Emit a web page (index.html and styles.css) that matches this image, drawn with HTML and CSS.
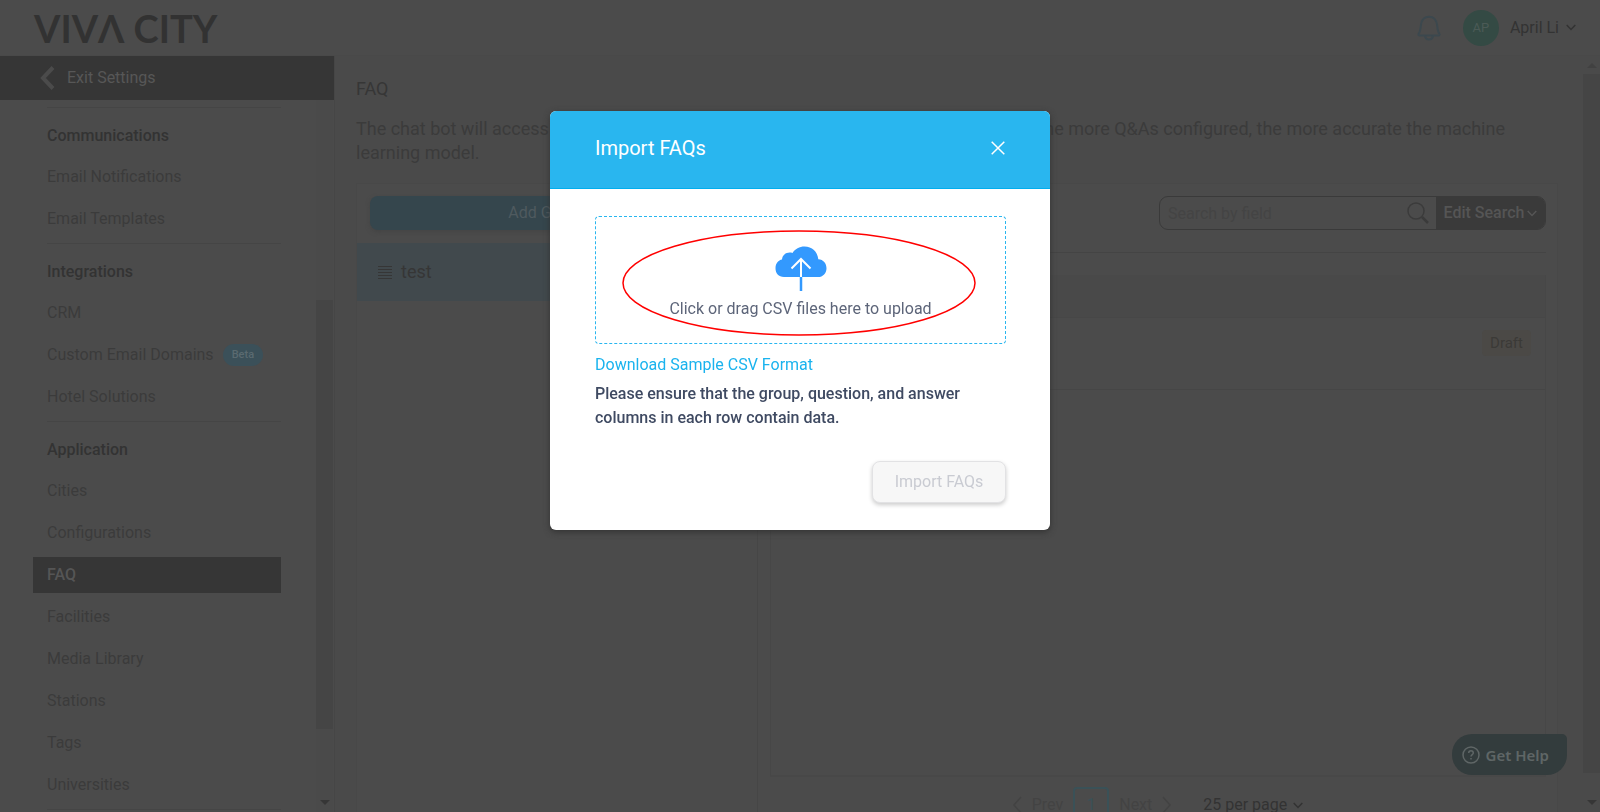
FILE: index.html
```
<!DOCTYPE html>
<html lang="en">
<head>
    <meta charset="UTF-8">
    <title>FAQ - Viva City</title>
    <link rel="stylesheet" href="styles.css">
</head>
<body>
<header class="topbar">
    <a class="logo" href="#" aria-label="VIVA CITY">VIVΛ CITY</a>
    <div class="account">
        <button class="bell" aria-label="Notifications">
            <svg width="24" height="26" viewBox="0 0 24 26" fill="none" stroke="currentColor" stroke-width="2"><path d="M2.5 20.500h19c1 0 1.500-1 .8-1.800-1.600-2-1.600-4.200-2.300-9C19.300 5 16.500 1.800 12 1.800S4.700 5 4 9.700c-.7 4.800-.7 7-2.300 9-.7.800-.2 1.800.8 1.800z"/><path d="M8 21c.5 2.600 2 3.500 4 3.500s3.500-.9 4-3.500"/></svg>
        </button>
        <span class="avatar">AP</span>
        <button class="user">April Li
            <svg width="10" height="7" viewBox="0 0 10 7" fill="none" stroke="currentColor" stroke-width="1.500"><path d="M.7 1L5 5.500 9.300 1"/></svg>
        </button>
    </div>
</header>
<div class="page">
    <aside class="sidebar">
        <a class="exit" href="#">
            <svg width="15" height="24" viewBox="0 0 15 24" fill="none" stroke="currentColor" stroke-width="4"><path d="M13 1.500L3 12l10 10.500"/></svg>
            Exit Settings
        </a>
        <div class="side-body">
            <nav class="menu">
                <section>
                    <h2>Communications</h2>
                    <a href="#">Email Notifications</a>
                    <a href="#">Email Templates</a>
                </section>
                <section>
                    <h2>Integrations</h2>
                    <a href="#">CRM</a>
                    <a href="#">Custom Email Domains <span class="beta">Beta</span></a>
                    <a href="#">Hotel Solutions</a>
                </section>
                <section>
                    <h2>Application</h2>
                    <a href="#">Cities</a>
                    <a href="#">Configurations</a>
                    <a class="active" href="#">FAQ</a>
                    <a href="#">Facilities</a>
                    <a href="#">Media Library</a>
                    <a href="#">Stations</a>
                    <a href="#">Tags</a>
                    <a href="#">Universities</a>
                </section>
                <section></section>
            </nav>
            <div class="scroll side-scroll">
                <div class="thumb"></div>
                <div class="down"></div>
            </div>
        </div>
    </aside>
    <main class="content">
        <h1>FAQ</h1>
        <p class="intro">The chat bot will access the configured Q&amp;As to answer commonly asked questions. The more Q&amp;As configured, the more accurate the machine learning model.</p>
        <div class="card">
            <div class="groups">
                <button class="add">Add Group</button>
                <a class="group" href="#">
                    <svg width="14" height="13" viewBox="0 0 14 13" stroke="currentColor" stroke-width="1"><path d="M0 .5h14M0 3.500h14M0 6.500h14M0 9.500h14M0 12.500h14"/></svg>
                    test
                </a>
            </div>
            <div class="questions">
                <form class="search">
                    <input type="text" placeholder="Search by field" aria-label="Search by field">
                    <svg width="22" height="22" viewBox="0 0 22 22" fill="none" stroke="currentColor"><circle cx="9" cy="9" r="8" stroke-width="1.500"/><path d="M15 15l6 6" stroke-width="2.500"/></svg>
                    <button type="button">Edit Search
                        <svg width="10" height="7" viewBox="0 0 10 7" fill="none" stroke="currentColor" stroke-width="1.500"><path d="M.7 1L5 5.500 9.300 1"/></svg>
                    </button>
                </form>
                <div class="list">
                    <div class="list-head"></div>
                    <div class="list-row"><span class="draft">Draft</span></div>
                </div>
                <div class="pager">
                    <button class="prev"><svg width="9" height="18" viewBox="0 0 9 18" fill="none" stroke="currentColor" stroke-width="1.500"><path d="M8 1L1 9l7 8"/></svg>Prev</button>
                    <button class="num">1</button>
                    <button class="next">Next<svg width="9" height="18" viewBox="0 0 9 18" fill="none" stroke="currentColor" stroke-width="1.500"><path d="M1 1l7 8-7 8"/></svg></button>
                    <button class="per">25 per page
                        <svg width="10" height="7" viewBox="0 0 10 7" fill="none" stroke="currentColor" stroke-width="1.500"><path d="M.7 1L5 5.500 9.300 1"/></svg>
                    </button>
                </div>
            </div>
        </div>
    </main>
    <div class="scroll page-scroll">
        <div class="up"></div>
        <div class="thumb"></div>
        <div class="down"></div>
    </div>
</div>
<button class="help">
    <svg width="18" height="18" viewBox="0 0 18 18" fill="none" stroke="currentColor" stroke-width="1.500"><circle cx="9" cy="9" r="8"/><path d="M6.700 7c0-3 4.600-3 4.600 0 0 1.500-2.300 1.600-2.300 3.400M9 12v1.600"/></svg>
    Get Help
</button>
<div class="overlay">
    <div class="modal" role="dialog" aria-labelledby="modal-title">
        <div class="modal-head">
            <h2 id="modal-title">Import FAQs</h2>
            <button class="close" aria-label="Close">
                <svg width="14" height="14" viewBox="0 0 14 14" stroke="currentColor" stroke-width="1.500"><path d="M.7.7l12.600 12.600M13.300.7L.7 13.300"/></svg>
            </button>
        </div>
        <div class="modal-body">
            <button class="drop">
                <svg width="52" height="45" viewBox="0 0 52 45"><path d="M9 31C3.500 31 .5 27 .5 22.200c0-5 3-8 6.500-8.700C7.500 8.500 12 5.500 17.500 7 20 3 24.500.5 29.500.5c7.500 0 13 5 13.800 12.700 5 .3 8.200 4 8.200 9 0 5-3.500 8.800-8.500 8.800z" fill="#3399fe"/><path d="M26 31v14" stroke="#3399fe" stroke-width="2.500"/><path d="M26 31V13M16.500 22.500L26 13l9.500 9.500" fill="none" stroke="#fff" stroke-width="2"/></svg>
                <span>Click or drag CSV files here to upload</span>
                <svg class="ring" viewBox="0 0 354 106" preserveAspectRatio="none"><ellipse cx="177" cy="53" rx="176" ry="52" fill="none" stroke="#f00" stroke-width="1.500"/></svg>
            </button>
            <a class="sample" href="#">Download Sample CSV Format</a>
            <p>Please ensure that the group, question, and answer columns in each row contain data.</p>
            <button class="import" disabled>Import FAQs</button>
        </div>
    </div>
</div>
</body>
</html>
```
FILE: styles.css
```
*{
    box-sizing: border-box;
}
body{
    margin: 0;
    height: 100vh;
    display: flex;
    flex-direction: column;
    overflow: hidden;
    background: #4a4a4a;
    color: #3b3b3b;
    font: 16px/22px Roboto, sans-serif;
}
h1,h2,p{
    margin: 0;
}
a{
    color: inherit;
    text-decoration: none;
}
button{
    padding: 0;
    border: 0;
    background: none;
    color: inherit;
    font: inherit;
}
svg{
    flex: none;
}
.topbar{
    flex: none;
    height: 56px;
    padding: 0 24px 0 34px;
    display: flex;
    justify-content: space-between;
    align-items: center;
    background: #4b4b4b;
    border-bottom: 1px solid #494949;
}
.logo{
    font: 700 38px/54px Lato, sans-serif;
    color: #323232;
}
.account{
    display: flex;
    align-items: center;
}
.bell{
    height: 26px;
    color: #3c484e;
}
.avatar{
    width: 36px;
    height: 36px;
    margin: 0 11px 0 22px;
    border-radius: 50%;
    background: #344a44;
    color: #4b5a56;
    font-size: 13px;
    line-height: 36px;
    text-align: center;
}
.user{
    display: flex;
    align-items: center;
    gap: 7px;
    color: #333;
}
.page{
    flex: 1;
    min-height: 0;
    display: flex;
}
.sidebar{
    flex: none;
    width: 335px;
    display: flex;
    flex-direction: column;
    background: #4b4b4b;
    border-right: 1px solid #464646;
}
.exit{
    flex: none;
    height: 44px;
    padding-left: 40px;
    display: flex;
    align-items: center;
    gap: 12px;
    background: #363636;
    color: #575757;
}
.exit svg{
    color: #4b4b4b;
}
.side-body{
    flex: 1;
    min-height: 0;
    padding-right: 1px;
    display: flex;
    justify-content: space-between;
}
.menu{
    width: 281px;
    padding: 7px 0 0 33px;
    overflow: hidden;
}
.menu section:before{
    content: "";
    display: block;
    margin-left: 14px;
    border-top: 1px solid #454545;
}
.menu h2{
    margin: 17px 0 12px 14px;
    font-size: 16px;
    line-height: 22px;
    font-weight: 500;
    color: #333;
}
.menu a{
    height: 36px;
    margin-bottom: 6px;
    padding-left: 14px;
    display: flex;
    align-items: center;
}
.menu .active{
    background: #363636;
    color: #555;
    font-weight: 500;
}
.beta{
    margin-left: 9px;
    padding: 0 9px;
    border-radius: 11px;
    background: #3b5059;
    color: #5a6a70;
    font-size: 11px;
    font-weight: 500;
}
.scroll{
    width: 17px;
    display: flex;
    flex-direction: column;
    align-items: center;
}
.thumb{
    width: 100%;
    background: #454545;
}
.side-scroll{
    padding: 200px 0 7px;
    background: #4a4a4a;
    justify-content: space-between;
}
.side-scroll .thumb{
    height: 85%;
}
.up,.down{
    border: 5px solid transparent;
}
.down{
    border-top-color: #363636;
    border-bottom: 0;
}
.up{
    border-bottom-color: #414141;
    border-top: 0;
}
.page-scroll{
    padding: 7px 0;
    justify-content: space-between;
}
.page-scroll .thumb{
    flex: 1;
    margin: 6px 0 27px;
}
.content{
    flex: 1;
    min-width: 0;
    padding: 21px 25px 0 21px;
    display: flex;
    flex-direction: column;
}
h1{
    font-size: 18px;
    line-height: 24px;
    font-weight: 400;
    color: #363636;
}
.intro{
    margin: 16px 0 18px;
    font-size: 18px;
    line-height: 24px;
}
.card{
    flex: 1;
    min-height: 0;
    display: flex;
    border: 1px solid #484848;
    border-bottom: 0;
    background: #4b4b4b;
}
.groups{
    width: 401px;
    border-right: 1px solid #464646;
}
.add{
    width: 352px;
    height: 34px;
    margin: 12px 13px 13px;
    border-radius: 8px;
    background: #35464d;
    color: #4f5a5f;
    box-shadow: 0 2px 4px #444;
}
.group{
    height: 58px;
    padding-left: 21px;
    display: flex;
    align-items: center;
    gap: 9px;
    background: #41494d;
    color: #363636;
    font-size: 18px;
}
.questions{
    flex: 1;
    padding: 12px 11px 0 12px;
    display: flex;
    flex-direction: column;
}
.search{
    align-self: flex-end;
    width: 387px;
    height: 34px;
    margin-bottom: 22px;
    display: flex;
    align-items: center;
    border: 1px solid #3a3a3a;
    border-radius: 9px;
    overflow: hidden;
}
.search input{
    flex: 1;
    min-width: 0;
    height: 32px;
    padding: 0 8px;
    border: 0;
    background: none;
    font: inherit;
}
.search input::placeholder{
    color: #444;
}
.search > svg{
    margin-right: 7px;
}
.search button{
    width: 109px;
    height: 34px;
    display: flex;
    align-items: center;
    justify-content: center;
    gap: 3px;
    background: #3a3a3a;
    color: #555;
    font-weight: 500;
}
.questions:before{
    content: "";
    order: 1;
    border-top: 1px solid #444;
}
.list{
    order: 2;
    flex: 1;
    margin-top: 22px;
    border: 1px solid #474747;
    border-top: 0;
    border-bottom: 2px solid #484848;
}
.list-head{
    height: 43px;
    background: #494949;
    border-bottom: 1px solid #474747;
}
.list-row{
    height: 72px;
    padding: 12px 14px;
    display: flex;
    justify-content: flex-end;
    align-items: flex-start;
    border-bottom: 1px solid #464646;
}
.draft{
    padding: 2px 8px;
    border-radius: 4px;
    background: #4b4946;
    color: #3b3a37;
    font-size: 15px;
}
.pager{
    order: 3;
    flex: none;
    height: 35px;
    padding-top: 10px;
    display: flex;
    justify-content: center;
    align-items: flex-start;
    gap: 10px;
    color: #434343;
}
.pager button{
    height: 36px;
    display: flex;
    align-items: center;
    gap: 10px;
}
.pager .num{
    width: 36px;
    justify-content: center;
    border: 2px solid #3a5157;
    border-radius: 4px;
    color: #3a5157;
}
.pager .per{
    gap: 6px;
    margin-left: 22px;
    color: #333;
}
.help{
    position: fixed;
    right: 33px;
    bottom: 37px;
    height: 41px;
    padding: 0 18px 0 10px;
    display: flex;
    align-items: center;
    gap: 6px;
    border-radius: 20px 5px 20px 20px;
    background: #333c3d;
    color: #5f6666;
    font: 600 15px/22px "Noto Sans", sans-serif;
}
.overlay{
    position: fixed;
    inset: 0;
    display: flex;
    justify-content: center;
    align-items: flex-start;
    padding-top: 111px;
}
.modal{
    width: 500px;
    border-radius: 6px;
    background: #fff;
    box-shadow: 0 2px 6px #333;
    color: #3f4a62;
    overflow: hidden;
}
.modal-head{
    height: 78px;
    padding: 0 45px 3px;
    display: flex;
    justify-content: space-between;
    align-items: center;
    background: #29b6ef;
    border-bottom: 1px solid #00aeef;
    color: #fff;
}
.modal-head h2{
    font-size: 20px;
    font-weight: 400;
}
.close{
    height: 14px;
    line-height: 14px;
}
.close svg{
    display: block;
}
.modal-body{
    padding: 27px 44px 27px 45px;
    display: flex;
    flex-direction: column;
}
.drop{
    position: relative;
    height: 128px;
    padding-top: 6px;
    display: flex;
    flex-direction: column;
    align-items: center;
    justify-content: center;
    gap: 7px;
    border: 1px dashed #29b6ef;
    border-radius: 4px;
    color: #5d6579;
}
.ring{
    position: absolute;
    left: 26px;
    top: 13px;
    width: 354px;
    height: 106px;
}
.sample{
    margin: 10px 0 6px;
    align-self: flex-start;
    color: #1ab3ee;
}
.modal p{
    line-height: 24px;
    font-weight: 500;
}
.import{
    align-self: flex-end;
    width: 134px;
    height: 42px;
    margin-top: 31px;
    border: 1px solid #e2e2e4;
    border-radius: 8px;
    background: #f7f7f7;
    box-shadow: 0 2px 4px #ccc;
    color: #c9cbd2;
}
```
